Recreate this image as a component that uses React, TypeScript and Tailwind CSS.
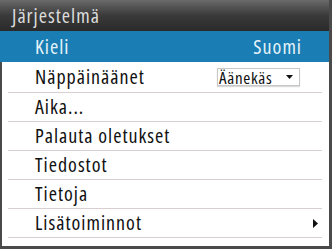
import React from "react";

const rows = [
  "Aika...",
  "Palauta oletukset",
  "Tiedostot",
  "Tietoja",
];

export default function App() {
  return (
    <div
      className="w-[332px] h-[249px] bg-white flex flex-col overflow-hidden [font-stretch:80%]"
      style={{ fontFamily: '"Open Sans", "Noto Sans", sans-serif' }}
    >
      <div className="h-[31px] bg-gradient-to-b from-[#6a6a6a] via-[#3a3a3a] to-[#2a2a2a] flex items-center pl-[12px] pt-[1px] text-[#dcdcdc] text-[20px] tracking-[1px] border-r-[3px] border-[#4a4a4a]">
        Järjestelmä
      </div>
      <div className="flex-1 flex flex-col border-l-[2px] border-r-[3px] border-b-[3px] border-[#4a4a4a]">
        <div className="h-[31px] bg-[#1a7db3] flex items-center justify-between pr-[27px] text-[#e6f3fa] text-[20px] tracking-[1px] -ml-[2px] pl-[35px]">
          <span>Kieli</span>
          <span>Suomi</span>
        </div>
        <div className="mx-[6px] mr-[7px]">
          <div className="h-[31px] border-b border-[#d9cfd1] flex items-center justify-between pl-[27px] pr-[22px] text-[#111] text-[20px] tracking-[1px]">
            <span>Näppäinäänet</span>
            <div className="h-[18px] w-[83px] border border-[#c8c8c8] shadow-[0_1px_1px_rgba(0,0,0,0.15)] flex items-center justify-between pl-[1px] pr-[6px] text-[17px] tracking-[0.7px] leading-none">
              <span>Äänekäs</span>
              <svg width="7" height="4" viewBox="0 0 7 4">
                <path d="M0 0 L7 0 L3.5 4 Z" fill="#111" />
              </svg>
            </div>
          </div>
          {rows.map((r) => (
            <div
              key={r}
              className="h-[29px] border-b border-[#d9cfd1] flex items-center pl-[27px] text-[#111] text-[20px] tracking-[1px]"
            >
              {r}
            </div>
          ))}
          <div className="h-[29px] border-b border-[#d9cfd1] flex items-center justify-between pl-[27px] pr-[4px] text-[#111] text-[20px] tracking-[1px]">
            <span>Lisätoiminnot</span>
            <svg width="5" height="9" viewBox="0 0 5 9">
              <path d="M0 0 L5 4.5 L0 9 Z" fill="#111" />
            </svg>
          </div>
        </div>
      </div>
    </div>
  );
}
